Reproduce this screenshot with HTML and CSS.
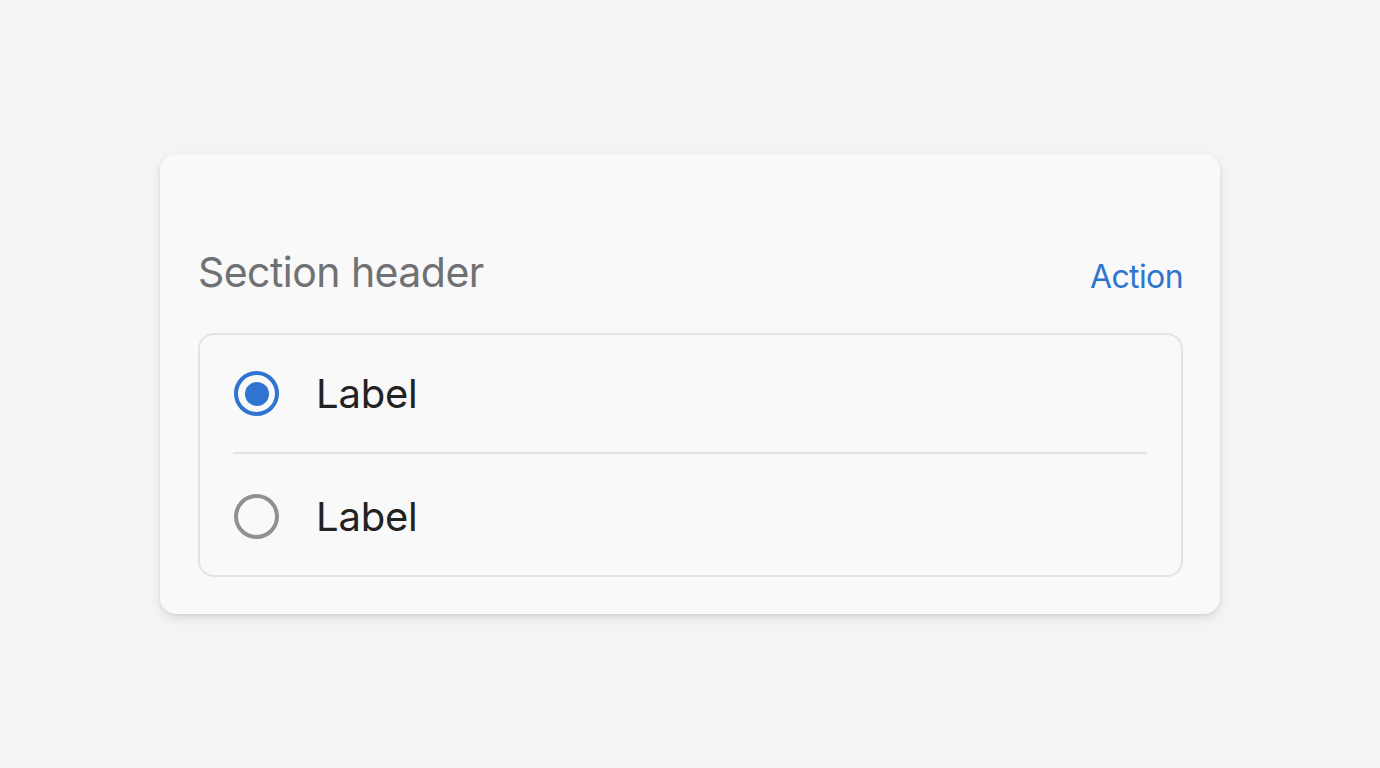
FILE: index.html
```html
<!DOCTYPE html>
<html lang="en">
<head>
<meta charset="utf-8">
<title>Section</title>
<link rel="stylesheet" href="styles.css">
</head>
<body>
<main class="page">
  <section class="card">
    <div class="card-header">
      <h2 class="section-title">Section header</h2>
      <a class="action" href="#">Action</a>
    </div>
    <div class="list">
      <label class="row">
        <span class="radio radio-on"><span class="radio-dot"></span></span>
        <span class="row-label">Label</span>
      </label>
      <div class="divider"></div>
      <label class="row row-last">
        <span class="radio radio-off"></span>
        <span class="row-label">Label</span>
      </label>
    </div>
  </section>
</main>
</body>
</html>
```

FILE: styles.css
```css
* { box-sizing: border-box; }
html, body {
  margin: 0;
  padding: 0;
  background: #f4f4f4;
  font-family: Inter, Roboto, "Noto Sans", "Liberation Sans", sans-serif;
}
.page {
  width: 1380px;
  height: 768px;
  padding-top: 154px;
  padding-left: 160px;
}
.card {
  width: 1060px;
  height: 460px;
  background: #f9f9f9;
  border-radius: 16px;
  box-shadow: 0 4px 10px rgba(0, 0, 0, 0.10), 0 1px 3px rgba(0, 0, 0, 0.06);
  padding: 93px 37px 37px 38px;
}
.card-header {
  display: flex;
  justify-content: space-between;
  align-items: baseline;
  height: 50px;
}
.section-title {
  margin: 0;
  font-size: 41px;
  line-height: 50px;
  font-weight: 400;
  letter-spacing: -0.55px;
  color: #6f7175;
}
.action {
  font-size: 32px;
  line-height: 50px;
  letter-spacing: -0.6px;
  color: #2f74d0;
  text-decoration: none;
  position: relative;
  top: 1px;
}
.list {
  margin-top: 36px;
  border: 2px solid #e3e3e3;
  border-radius: 16px;
  height: 244px;
  display: flex;
  flex-direction: column;
}
.row {
  display: flex;
  align-items: center;
  height: 118px;
  padding-left: 34px;
  gap: 37px;
}
.row-last {
  height: 122px;
  padding-top: 4px;
}
.divider {
  height: 2px;
  background: #e3e3e3;
  margin: 0 34px 0 33px;
}
.radio {
  width: 45px;
  height: 45px;
  border-radius: 50%;
  border: 4px solid #8e9194;
  display: flex;
  align-items: center;
  justify-content: center;
  flex: none;
}
.radio-on {
  border-color: #2f74d0;
}
.radio-dot {
  width: 24px;
  height: 24px;
  border-radius: 50%;
  background: #2f74d0;
}
.row-label {
  font-size: 40px;
  color: #222222;
  line-height: 48px;
  letter-spacing: -0.2px;
}
```
